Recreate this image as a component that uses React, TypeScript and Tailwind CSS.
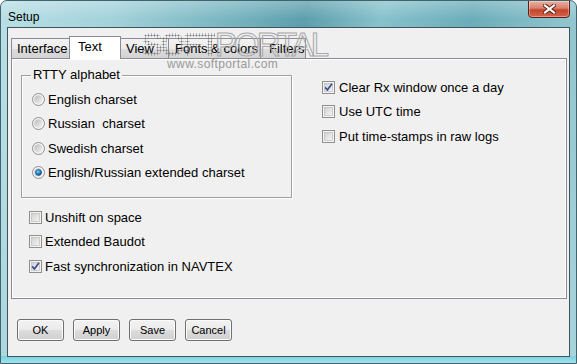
import React from 'react'

const font = "font-['Liberation_Sans',Arial,sans-serif]"

function Radio({ checked }: { checked?: boolean }) {
    return (
        <svg width="13" height="13" viewBox="0 0 13 13" className="shrink-0">
            <defs>
                <linearGradient id="rin" x1="0" y1="0" x2="1" y2="1">
                    <stop offset="0" stopColor="#b9b9b9" />
                    <stop offset="1" stopColor="#f6f6f6" />
                </linearGradient>
                <radialGradient id="rdot" cx="0.4" cy="0.35" r="0.7">
                    <stop offset="0" stopColor="#8fd4ff" />
                    <stop offset="0.5" stopColor="#1f86cf" />
                    <stop offset="1" stopColor="#0b4a7c" />
                </radialGradient>
            </defs>
            <circle cx="6.5" cy="6.5" r="6" fill="#f4f4f4" stroke="#8e8f8f" />
            <circle cx="6.5" cy="6.5" r="4.2" fill="url(#rin)" />
            {checked && <circle cx="6.5" cy="6.5" r="3" fill="url(#rdot)" stroke="#164a6e" strokeWidth="0.6" />}
        </svg>
    )
}

function Check({ checked }: { checked?: boolean }) {
    return (
        <svg width="13" height="13" viewBox="0 0 13 13" className="shrink-0">
            <defs>
                <linearGradient id="cin" x1="0" y1="0" x2="1" y2="1">
                    <stop offset="0" stopColor="#cfcfcf" />
                    <stop offset="1" stopColor="#f7f7f7" />
                </linearGradient>
            </defs>
            <rect x="0.5" y="0.5" width="12" height="12" fill="#f4f4f4" stroke="#8e8f8f" />
            <rect x="2.5" y="2.5" width="8" height="8" fill="url(#cin)" stroke="#b5b5b5" strokeWidth="0.6" />
            {checked && (
                <path d="M3.2 6.4 L5.4 9 L10 2.8" fill="none" stroke="#3b4f96" strokeWidth="1.7" strokeLinejoin="round" />
            )}
        </svg>
    )
}

function CloseGlyph() {
    return (
        <svg width="13" height="10" viewBox="0 0 13 10">
            <path d="M2 1.5 L11 8.5 M11 1.5 L2 8.5" stroke="#5a1e14" strokeWidth="4" strokeLinecap="square" />
            <path d="M2 1.5 L11 8.5 M11 1.5 L2 8.5" stroke="#ffffff" strokeWidth="2.2" strokeLinecap="square" />
        </svg>
    )
}

const tabs = [
    { label: 'Interface', w: 'w-[60px] pl-[5px]' },
    { label: 'Text', w: 'w-[52px] pl-[8px]', active: true },
    { label: 'View', w: 'w-[51px] pl-[7px]' },
    { label: 'Fonts & colors', w: 'w-[93px] pl-[6px]' },
    { label: 'Filters', w: 'w-[46px] pl-[8px]' },
]

const radios = ['English charset', 'Russian\u00a0 charset', 'Swedish charset', 'English/Russian extended charset']

export default function App() {
    return (
        <div className={`${font} relative w-[577px] h-[364px] overflow-hidden rounded-t-[7px] border border-[#41646c] bg-[linear-gradient(100deg,#b9dfe5_0%,#a3d2da_18%,#74b2be_38%,#5d9fad_48%,#87c2cc_60%,#6badba_74%,#a9d5dc_100%)] text-[13px] text-black`}>
            <div className="absolute inset-x-0 top-0 h-[18px] bg-[linear-gradient(rgba(255,255,255,0.25),rgba(255,255,255,0))]" />
            <div className="absolute inset-x-0 bottom-0 h-[7px] bg-[linear-gradient(#7ccfdc,#9fe3ee)]" />

            {/* title bar */}
            <div className="relative flex h-[26px] items-center pl-[7px] pt-[5px] text-[12px] text-black">Setup</div>

            <div className="absolute right-[6px] top-[-1px] flex h-[18px] w-[42px] items-center justify-center rounded-b-[4px] border border-[#5b1f15] bg-[linear-gradient(#eab1a3_0%,#d8806b_45%,#c4452d_55%,#d3644a_100%)] shadow-[inset_0_0_0_1px_rgba(255,255,255,0.35)]">
                <CloseGlyph />
            </div>

            {/* client */}
            <div className="relative mx-[6px] h-[330px] border border-[#3e555c] bg-[#f0f0f0] pl-[3px] pr-[2px] pt-[8px]">
                <div className="relative z-10 flex h-[22px] items-end">
                    {tabs.map((t) =>
                        t.active ? (
                            <div key={t.label} className={`${t.w} relative top-[1px] -mx-[2px] z-10 h-[23px] border border-b-0 border-[#898c95] bg-white pt-[1px] leading-[18px]`}>
                                {t.label}
                            </div>
                        ) : (
                            <div key={t.label} className={`${t.w} h-[20px] border border-b-0 border-[#898c95] bg-[linear-gradient(#f3f3f3_0%,#ebebeb_50%,#dddddd_51%,#d3d3d3_100%)] pt-[2px] leading-[16px] -ml-px first:ml-0`}>
                                {t.label}
                            </div>
                        )
                    )}
                </div>

                {/* tab panel */}
                <div className="flex h-[241px] border border-[#898c95] bg-[#f0f0f0] shadow-[inset_1px_1px_0_#ffffff,inset_-1px_-1px_0_#ffffff]">
                    <div className="pl-[9px] pt-[16px]">
                        <div className="relative w-[271px] border border-[#a0a0a0] pb-[12px] pl-[10px] pt-[11px] shadow-[inset_1px_1px_0_#ffffff,1px_1px_0_#ffffff]">
                            <div className="absolute left-[9px] top-[-9px] bg-[#f0f0f0] px-[2px] leading-[16px]">RTTY alphabet</div>
                            {radios.map((r, i) => (
                                <div key={r} className="flex h-[24.5px] items-center gap-[3px]">
                                    <Radio checked={i === 3} />
                                    <span className="whitespace-pre">{r}</span>
                                </div>
                            ))}
                        </div>
                        <div className="pl-[8px] pt-[7px]">
                            {[
                                ['Unshift on space', false],
                                ['Extended Baudot', false],
                                ['Fast synchronization in NAVTEX', true],
                            ].map(([label, c]) => (
                                <div key={label as string} className="flex h-[24.5px] items-center gap-[3px]">
                                    <Check checked={c as boolean} />
                                    <span>{label}</span>
                                </div>
                            ))}
                        </div>
                    </div>
                    <div className="ml-[30px] pt-[16px]">
                        {[
                            ['Clear Rx window once a day', true],
                            ['Use UTC time', false],
                            ['Put time-stamps in raw logs', false],
                        ].map(([label, c]) => (
                            <div key={label as string} className="flex h-[24.5px] items-center gap-[4px]">
                                <Check checked={c as boolean} />
                                <span>{label}</span>
                            </div>
                        ))}
                    </div>
                </div>

                {/* buttons */}
                <div className="flex gap-[9px] pl-[6px] pt-[20px]">
                    {['OK', 'Apply', 'Save', 'Cancel'].map((b) => (
                        <button key={b} className="flex h-[22px] w-[47px] items-center justify-center rounded-[3px] border border-[#707070] bg-[linear-gradient(#f2f2f2_0%,#ebebeb_50%,#dddddd_51%,#cfcfcf_100%)] text-[11px] shadow-[inset_0_0_0_1px_#fbfbfb]">
                            {b}
                        </button>
                    ))}
                </div>
            </div>

            {/* watermark */}
            <div className="pointer-events-none absolute left-[140px] top-[27px] z-20 flex items-start text-[33px] leading-none">
                <span className="w-[74px] bg-[radial-gradient(circle,#7a7a7a_0.9px,transparent_1.1px)] bg-[length:3px_3px] bg-clip-text tracking-[-3px] text-transparent font-bold">SOFT</span>
                <span className="tracking-[-3px] text-transparent [-webkit-text-stroke:1px_#a8a8a8]">PORTAL</span>
            </div>
            <div className="pointer-events-none absolute left-[166px] top-[57px] z-20 text-[12px] leading-none tracking-[0.4px] text-[#9a9a9a]">www.softportal.com</div>
        </div>
    )
}
